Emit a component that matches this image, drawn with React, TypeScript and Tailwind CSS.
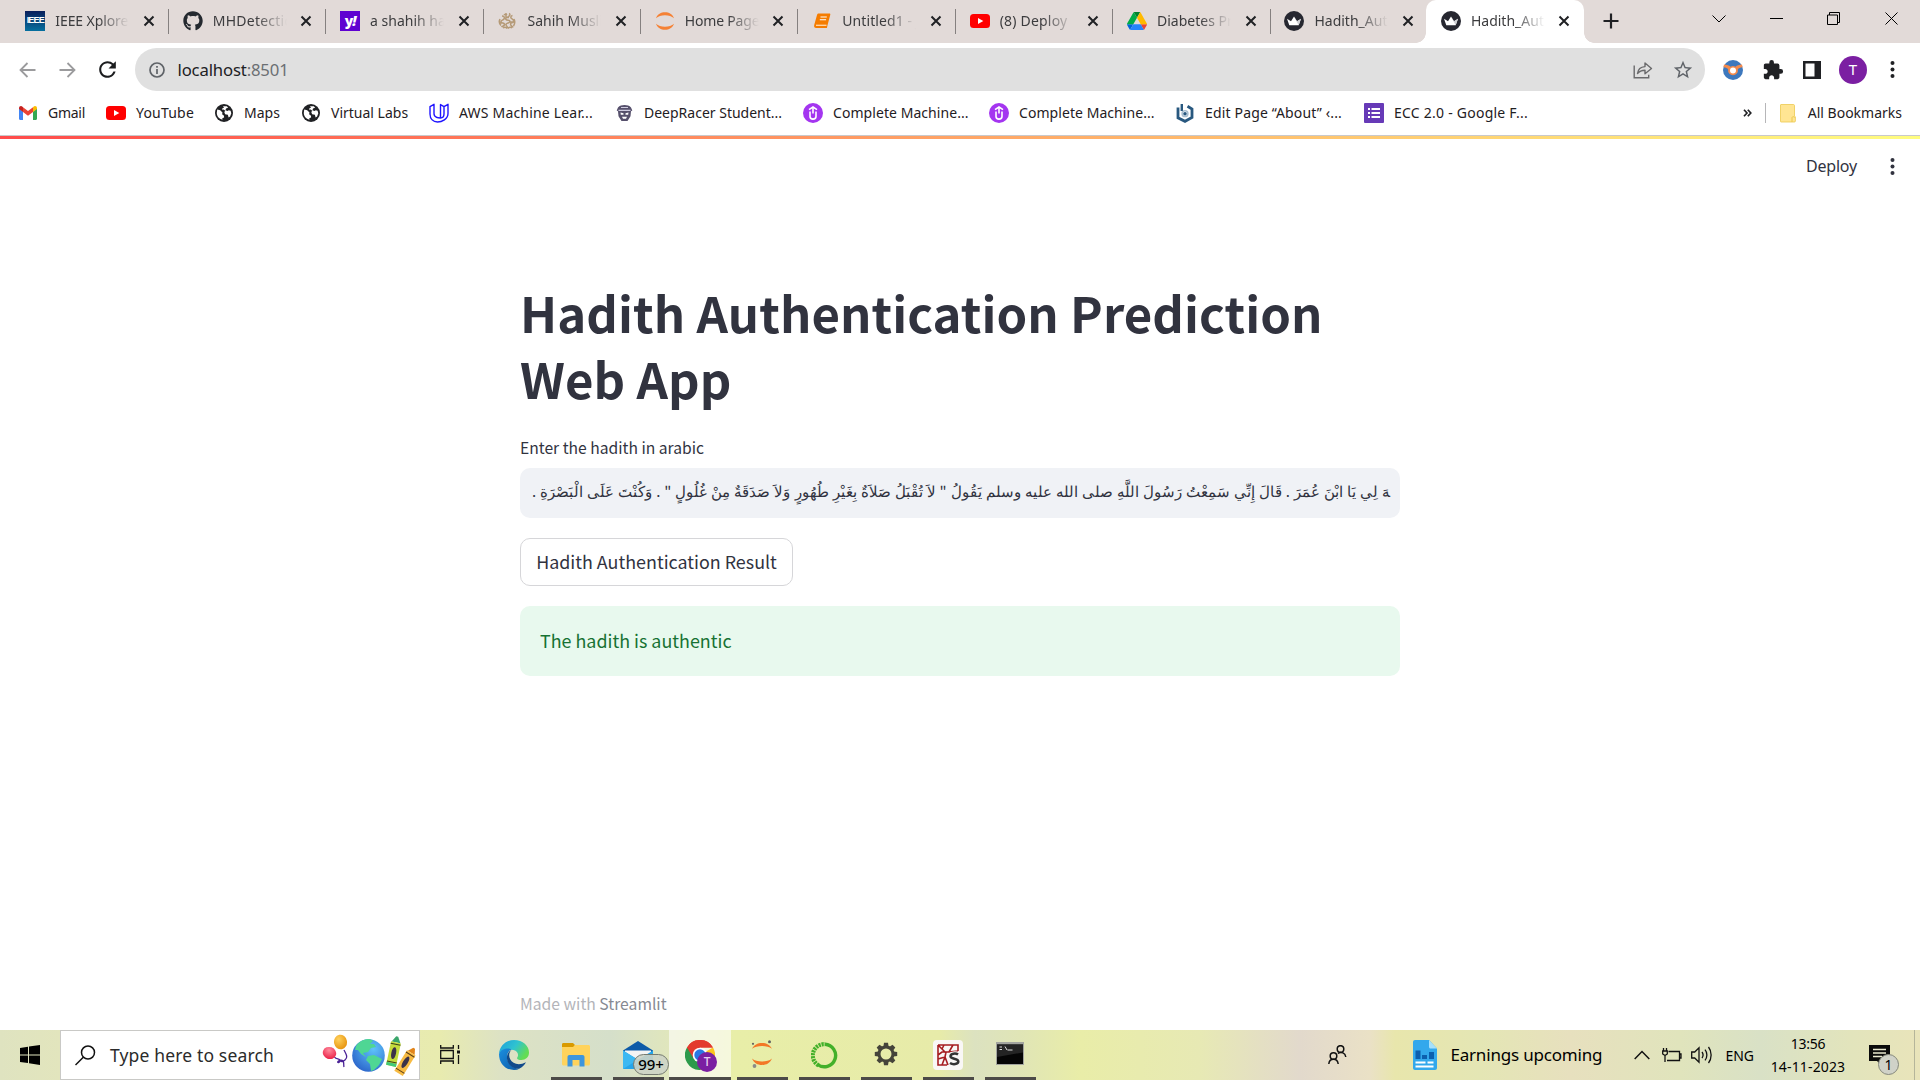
import React from "react";
import { FaGithub } from "react-icons/fa";
import { MdExtension, MdStarBorder, MdRefresh } from "react-icons/md";

const HADITH =
  "\u200Dهَ لِي يَا ابْنَ عُمَرَ . قَالَ إِنِّي سَمِعْتُ رَسُولَ اللَّهِ صلى الله عليه وسلم يَقُولُ \" لاَ تُقْبَلُ صَلاَةٌ بِغَيْرِ طُهُورٍ وَلاَ صَدَقَةٌ مِنْ غُلُولٍ \" . وَكُنْتَ عَلَى الْبَصْرَةِ .";

/* ---------- favicons ---------- */

const IeeeIcon = () => (
  <div className="flex h-5 w-5 items-center justify-center overflow-hidden bg-linear-to-b from-[#0a1f5c] to-[#06709f]">
    <span className="font-['Liberation_Sans',sans-serif] text-[9px] font-bold tracking-[-0.8px] text-white">IEEE</span>
  </div>
);

const YahooIcon = () => (
  <div className="flex h-5 w-5 items-center justify-center bg-[#5f01d1]">
    <span className="font-['Open_Sans',sans-serif] text-[14px] leading-none font-extrabold tracking-[-1px] text-white">
      y<i>!</i>
    </span>
  </div>
);

const SunnahIcon = () => (
  <svg width="20" height="20" viewBox="0 0 20 20" fill="none" stroke="#b59a77" strokeWidth="1.500">
    <path d="M9 2v5M12 2.500c2 1 0 3-1 3.500s-3 1-2 2.500 4 0 4 2-4 1-4 3 2 2 2 4M5 5c2 0 3 1.500 2 3S3.500 9 4 11s3 0 3.500 2-2 2-3 3M15.500 4.500c-2 .5-2 2-1 3s2.500 1 2 3-3 .5-3 2.500 2 2 2.500 3.500M3 8c-1 2-.5 5 1 6.500M17 8c1 2 .8 5-.5 7M7 4c1-1 2-1 3 0M6 17c1.500-1 3-1 4 .5M11 17.500c1-1.500 3-1.500 4-.5M2.500 12h4M13 11h4.500M9 6.500h3" />
  </svg>
);

const JupyterIcon = () => (
  <svg width="20" height="20" viewBox="0 0 20 20" fill="#f58134">
    <path d="M1 7.3C2.500 3.200 6 1.300 10 1.300s7.500 1.900 9 6C16.800 5.300 13.700 4.300 10 4.300s-6.800 1-9 3z" />
    <path d="M1 12.700c1.500 4.100 5 6 9 6s7.500-1.900 9-6c-2.200 2-5.300 3-9 3s-6.800-1-9-3z" />
  </svg>
);

const NotebookIcon = () => (
  <svg width="18" height="18" viewBox="0 0 18 18">
    <path d="M5.500 1.500h10.800c.8 0 1.200.5 1 1.200l-2.800 10.600-.6 2.700H3.200c-1.600 0-2.500-1.300-2-3L4 3c.2-.9.700-1.500 1.500-1.500z" fill="#f57c00" />
    <path d="M7.500 5h6.300M6.800 7.800h6.300" stroke="#fff" strokeWidth="1.100" />
    <path d="M3 13.300h10.500" stroke="#ffd9ad" strokeWidth="1.300" />
  </svg>
);

const YouTubeIcon = () => (
  <svg width="20" height="20" viewBox="0 0 20 20">
    <rect y="3" width="20" height="14" rx="3.500" fill="#f00" />
    <path d="M8 7l5.300 3L8 13z" fill="#fff" />
  </svg>
);

const DriveIcon = () => (
  <svg width="20" height="18" viewBox="0 0 87.3 78">
    <path d="m6.600 66.850 3.850 6.650c.8 1.400 1.950 2.500 3.300 3.300l13.750-23.800h-27.500c0 1.550.4 3.100 1.200 4.500z" fill="#0066da" />
    <path d="m43.650 25-13.750-23.800c-1.350.8-2.500 1.900-3.300 3.300l-25.400 44a9.060 9.060 0 0 0 -1.200 4.500h27.500z" fill="#00ac47" />
    <path d="m73.550 76.800c1.350-.8 2.500-1.900 3.300-3.300l1.600-2.750 7.650-13.250c.8-1.400 1.200-2.950 1.200-4.500h-27.502l5.852 11.500z" fill="#ea4335" />
    <path d="m43.650 25 13.750-23.800c-1.350-.8-2.900-1.200-4.500-1.200h-18.500c-1.600 0-3.150.45-4.500 1.200z" fill="#00832d" />
    <path d="m59.800 53h-32.300l-13.750 23.800c1.350.8 2.900 1.200 4.500 1.200h50.800c1.600 0 3.150-.45 4.500-1.200z" fill="#2684fc" />
    <path d="m73.400 26.500-12.700-22c-.8-1.400-1.950-2.500-3.300-3.300l-13.750 23.800 16.150 28h27.450c0-1.550-.4-3.100-1.200-4.500z" fill="#ffba00" />
  </svg>
);

const CrownIcon = () => (
  <svg width="20" height="20" viewBox="0 0 20 20">
    <circle cx="10" cy="10" r="10" fill="#262730" />
    <path d="M3 7.800l4 2.400L10 5.500l3 4.700 4-2.400-2.300 6.400H5.300z" fill="#fff" />
    <path d="M10 5.500l3 4.700 4-2.400-2.300 6.400z" fill="#cfd0d4" />
  </svg>
);

const GmailIcon = () => (
  <svg width="18" height="14" viewBox="0 0 18 14">
    <path d="M0 2.500V12.800c0 .7.500 1.200 1.200 1.200H4V5.500z" fill="#4285f4" />
    <path d="M14 5.500V14h2.800c.7 0 1.200-.5 1.200-1.200V2.500z" fill="#34a853" />
    <path d="M4 1.200l5 3.800 5-3.800v4.800L9 9.800 4 6z" fill="#ea4335" />
    <path d="M0 2.200C0 .3 2-.6 3.500.7L4 1.200V6L0 3z" fill="#c5221f" />
    <path d="M18 2.200c0-1.900-2-2.800-3.500-1.500l-.5.500V6l4-3z" fill="#fbbc04" />
  </svg>
);

const GlobeIcon = () => (
  <svg width="18" height="18" viewBox="0 0 18 18">
    <circle cx="9" cy="9" r="9" fill="#202124" />
    <path d="M2.200 5.500l3 .8 2.300 2.200-.4 1.800 1.900 1.500.1 1.700-1.800.7.200 1.500C4 15 1.700 12 1.800 8.800z" fill="#fff" />
    <path d="M8 2.200h3.800l1.300 1.500-2.100.8-.5 1.700 2 .7 1.300-.7 1.800.6.7 2.500-1.200 3.300-1.500 1-.7-2.800-2.800-.5-.8-2.200 1-1.300-1.700-1.300-1.500.3.300-1.500 1.600-.5z" fill="#fff" />
  </svg>
);

const UdacityIcon = () => (
  <svg width="20" height="20" viewBox="0 0 20 20" fill="none" stroke="#2015ff" strokeWidth="1.400" strokeLinejoin="round">
    <path d="M5 1.300L1 3.600V11c0 5 3.200 8 7.500 8S19 16 19 10.500V1.300l-4 2.300v7.200c0 2.800-1.500 4.200-3.500 4.200S5 14.500 5 10.500z" />
    <path d="M15 3.600l-3.500-2V15" />
  </svg>
);

const RacerIcon = () => (
  <svg width="17" height="18" viewBox="0 0 17 18">
    <path d="M2 3.500C5 .3 12 .3 15 3.500l1.300 3-1.300.7-.5 5-3 4.800H5.500l-3-4.800-.5-5-1.300-.7z" fill="#56506c" />
    <path d="M2.500 6.300h12M5 3.500h7" stroke="#cfcce0" strokeWidth="1.200" />
    <path d="M4.500 8.500l3 .7v1.500H4.800zM12.500 8.500l-3 .7v1.500h2.700zM6 12.800h5l-1 2H7z" fill="#fff" />
  </svg>
);

const UdemyCircleIcon = () => (
  <svg width="20" height="20" viewBox="0 0 20 20">
    <circle cx="10" cy="10" r="10" fill="#a435f0" />
    <path d="M6 6.700L10 4l4 2.700" fill="none" stroke="#fff" strokeWidth="1.600" />
    <path d="M7 8.500v5c0 1.700 1.100 2.600 3 2.600s3-.9 3-2.600v-5M10 5v5.500" fill="none" stroke="#fff" strokeWidth="1.600" />
  </svg>
);

const HexIcon = () => (
  <svg width="18" height="20" viewBox="0 0 18 20" fill="none" stroke="#28587f" strokeWidth="2.800">
    <path d="M2 4.500v10.300L9 18.300l7-3.800V6L11.500 3.300" />
    <path d="M5.800 1v7" strokeWidth="2.400" />
    <circle cx="9" cy="10.700" r="2.900" strokeWidth="1.500" stroke="#a9bfd0" />
    <circle cx="9" cy="10.700" r="1.800" fill="#28587f" stroke="none" />
  </svg>
);

const FormsIcon = () => (
  <svg width="20" height="20" viewBox="0 0 20 20">
    <rect width="20" height="20" rx="1" fill="#673ab7" />
    <path d="M4 6h2M4 10h2M4 14h2M7.500 6H16M7.500 10H16M7.500 14H16" stroke="#fff" strokeWidth="2" />
  </svg>
);

const FolderIcon = () => (
  <svg width="16" height="19" viewBox="0 0 16 19">
    <path d="M1 .5h12.500c.5 0 1 .5 1 1v10.500l.9 1v4c0 .6-.4 1-1 1H1c-.3 0-.5-.2-.5-.5V1C.5.700.7.500 1 .5z" fill="#ffe593" stroke="#ecc94f" strokeWidth=".8" />
    <path d="M12 18v-4.500c0-1 2.500-1 2.500 0" fill="none" stroke="#ecc94f" />
  </svg>
);

/* ---------- browser chrome ---------- */

const TABS = [
  { icon: <IeeeIcon />, title: "IEEE Xplore", track: "tracking-[-0.1px]" },
  { icon: <FaGithub size={20} color="#24292f" />, title: "MHDetectio", track: "tracking-[0.25px]" },
  { icon: <YahooIcon />, title: "a shahih had", track: "tracking-normal" },
  { icon: <SunnahIcon />, title: "Sahih Musli", track: "tracking-normal" },
  { icon: <JupyterIcon />, title: "Home Page", track: "tracking-[-0.2px]" },
  { icon: <NotebookIcon />, title: "Untitled1 - J", track: "tracking-[0.1px]" },
  { icon: <YouTubeIcon />, title: "(8) Deploy", track: "tracking-[0.2px]" },
  { icon: <DriveIcon />, title: "Diabetes Pre", track: "tracking-normal" },
  { icon: <CrownIcon />, title: "Hadith_Auth", track: "tracking-normal" },
];

const Cross = () => (
  <svg width="12" height="12" viewBox="0 0 12 12" stroke="#202124" strokeWidth="2">
    <path d="M1.500 1.500l9 9M10.500 1.500l-9 9" />
  </svg>
);

function TabBody({ icon, title, track }: { icon: React.ReactNode; title: string; track: string }) {
  return (
    <>
      <span className="flex w-5 shrink-0 justify-center">{icon}</span>
      <span
        className={`ml-[10px] w-[74px] shrink-0 overflow-hidden text-[14px] leading-5 whitespace-nowrap text-[#3c3c3e] mask-[linear-gradient(to_right,black_58%,transparent_100%)] ${track}`}
      >
        {title}
      </span>
      <span className="ml-[13.500px]">
        <Cross />
      </span>
    </>
  );
}

function TabStrip() {
  return (
    <div className="flex h-[43px] bg-[#e2dad8] pl-[11px]">
      {TABS.map((t, i) => (
        <div key={i} className="relative flex h-[42px] w-[157.400px] shrink-0 items-center pl-[14.300px]">
          <TabBody {...t} />
          {i < 8 && <span className="absolute top-[9px] -right-[0.500px] h-[25px] w-px bg-[#85807f]" />}
        </div>
      ))}
      <div className="relative -ml-[1.600px] flex h-[43px] w-[158px] shrink-0 items-center rounded-t-[10px] bg-white pl-[15px] pb-px">
        <span className="absolute bottom-0 -left-[10px] h-[10px] w-[10px] bg-[radial-gradient(circle_at_0_0,#e2dad8_9.500px,white_10px)]" />
        <span className="absolute -right-[10px] bottom-0 h-[10px] w-[10px] bg-[radial-gradient(circle_at_100%_0,#e2dad8_9.500px,white_10px)]" />
        <TabBody icon={<CrownIcon />} title="Hadith_Auth" track="tracking-normal" />
      </div>
      <div className="ml-[19px] flex h-[42px] items-center">
        <svg width="16" height="16" viewBox="0 0 16 16" stroke="#202124" strokeWidth="2.200">
          <path d="M8 .5v15M.5 8h15" />
        </svg>
      </div>
      <div className="ml-auto flex h-[37px] items-center pr-[22px] text-black">
        <svg width="14" height="8" viewBox="0 0 14 8" fill="none" stroke="currentColor">
          <path d="M.5.500L7 7l6.500-6.500" />
        </svg>
        <svg className="ml-[44px]" width="13" height="13" viewBox="0 0 13 13" stroke="currentColor">
          <path d="M0 6.500h13" />
        </svg>
        <svg className="ml-[44px]" width="13" height="13" viewBox="0 0 13 13" fill="none" stroke="currentColor">
          <path d="M.5 3h10v9.500H.5zM2.500 3V.5h10v10h-2" />
        </svg>
        <svg className="ml-[45px]" width="13" height="13" viewBox="0 0 13 13" stroke="currentColor">
          <path d="M.5.500l12 12M12.500.500l-12 12" />
        </svg>
      </div>
    </div>
  );
}

const Dots = ({ color = "#202124" }: { color?: string }) => (
  <svg width="5" height="17" viewBox="0 0 5 17" fill={color}>
    <circle cx="2.500" cy="2.100" r="2" />
    <circle cx="2.500" cy="8.500" r="2" />
    <circle cx="2.500" cy="14.900" r="2" />
  </svg>
);

function Toolbar() {
  return (
    <div className="flex h-[53px] items-center">
      <svg className="ml-[19px]" width="17" height="16" viewBox="0 0 17 16" fill="none" stroke="#9b9b9d" strokeWidth="1.800">
        <path d="M16.500 8H1.500M8.500 1L1.500 8l7 7" />
      </svg>
      <svg className="ml-[23px]" width="17" height="16" viewBox="0 0 17 16" fill="none" stroke="#9b9b9d" strokeWidth="1.800">
        <path d="M.5 8h15M8.500 1l7 7-7 7" />
      </svg>
      <MdRefresh className="ml-[19px]" size={25} color="#1c1d1f" />
      <div className="ml-[15px] flex h-[43px] w-[1570px] items-center rounded-full bg-[#e0e0e0] pl-[14px]">
        <svg width="16" height="16" viewBox="0 0 16 16" fill="none" stroke="#5f6368" strokeWidth="1.700">
          <circle cx="8" cy="8" r="7" />
          <path d="M8 7v5M8 4v1.800" />
        </svg>
        <span className="ml-[12.500px] text-[16.700px] tracking-[-0.150px] text-[#202124]">
          localhost<span className="text-[#6b6f73]">:8501</span>
        </span>
        <svg className="ml-auto" width="20" height="18" viewBox="0 0 20 18" fill="none" stroke="#6a6a6c" strokeWidth="1.400">
          <path d="M1.200 4.500v12.300h14.500v-3" />
          <path d="M4.500 12.500c.5-4.200 3-6.600 7.500-6.900V2l6.500 5.500-6.500 5.200V9.200c-3.500 0-5.500.8-7.500 3.300z" strokeLinejoin="round" />
        </svg>
        <MdStarBorder className="mr-[11px] ml-[19px]" size={22} color="#5f6368" />
      </div>
      <svg className="ml-[18px]" width="20" height="20" viewBox="0 0 20 20">
        <circle cx="10" cy="10" r="10" fill="#3d78bd" />
        <path d="M1 4.500c3 0 5 1 6.500 2.200a5 5 0 0 1 5 0C14 5.500 16 4.500 19 4.500l.6 2.700c-2.600.3-4 .8-4.800 2.200a4.900 4.900 0 1 1-9.600 0C4.400 8 3 7.500.4 7.200z" fill="#f58a4b" />
        <circle cx="10" cy="10.500" r="3" fill="#fff" />
      </svg>
      <MdExtension className="ml-[19px]" size={22} color="#202124" />
      <svg className="ml-[19px]" width="18" height="18" viewBox="0 0 18 18">
        <path d="M0 0h18v18H0z" fill="#202124" />
        <path d="M2.500 2.500h9v13h-9z" fill="#fff" />
      </svg>
      <div className="ml-[18px] flex h-7 w-7 items-center justify-center rounded-full bg-[#7b1fa2] text-[15px] text-white">T</div>
      <span className="ml-[23px]">
        <Dots />
      </span>
    </div>
  );
}

const BOOKMARKS = [
  { icon: <GmailIcon />, label: "Gmail", box: "w-[88px]", track: "tracking-[-0.270px]" },
  { icon: <YouTubeIcon />, label: "YouTube", box: "w-[108px]", track: "tracking-[0.200px]" },
  { icon: <GlobeIcon />, label: "Maps", box: "w-[87px]", track: "tracking-normal" },
  { icon: <GlobeIcon />, label: "Virtual Labs", box: "w-[128px]", track: "tracking-normal" },
  { icon: <UdacityIcon />, label: "AWS Machine Lear...", box: "w-[185px]", track: "tracking-[0.190px]" },
  { icon: <RacerIcon />, label: "DeepRacer Student...", box: "w-[189px]", track: "tracking-normal" },
  { icon: <UdemyCircleIcon />, label: "Complete Machine...", box: "w-[186px]", track: "tracking-[0.060px]" },
  { icon: <UdemyCircleIcon />, label: "Complete Machine...", box: "w-[186px]", track: "tracking-[0.060px]" },
  { icon: <HexIcon />, label: "Edit Page “About” ‹...", box: "w-[189px]", track: "tracking-[0.160px]" },
  { icon: <FormsIcon />, label: "ECC 2.0 - Google F...", box: "w-[200px]", track: "tracking-[0.240px]" },
];

function BookmarkBar() {
  return (
    <div className="flex h-[40px] items-start border-b border-[#c9c9cb] pt-[7px] pl-[18px] text-[14px] leading-5 text-[#1f2023]">
      {BOOKMARKS.map((b, i) => (
        <div key={i} className={`flex h-5 shrink-0 items-center ${b.box}`}>
          <span className="flex w-5 shrink-0 justify-center">{b.icon}</span>
          <span className={`ml-[10px] whitespace-nowrap ${b.track}`}>{b.label}</span>
        </div>
      ))}
      <div className="ml-auto flex h-5 items-center pr-[18px]">
        <svg width="9" height="8" viewBox="0 0 9 8" fill="none" stroke="#202124" strokeWidth="1.700">
          <path d="M1 .7L4 4 1 7.300M4.800.7l3 3.300-3 3.300" />
        </svg>
        <span className="ml-[13px] h-5 w-px bg-[#b6b6b8]" />
        <span className="ml-[14px]">
          <FolderIcon />
        </span>
        <span className="ml-[12px] whitespace-nowrap">All Bookmarks</span>
      </div>
    </div>
  );
}

/* ---------- page ---------- */

function Page() {
  return (
    <div className="flex h-[894px] flex-col bg-white font-['Noto_Sans_CJK_JP',serif] text-[#31333f]">
      <div className="h-[3px] shrink-0 bg-[linear-gradient(90deg,#ff4b4b,#fffd80)]" />
      <div className="flex h-[54px] shrink-0 items-center justify-end pr-[25px]">
        <span className="font-['Noto_Sans',sans-serif] text-[16px] tracking-[-0.200px]">Deploy</span>
        <span className="ml-[33px]">
          <Dots color="#31333f" />
        </span>
      </div>
      <main className="mx-auto flex w-[880px] grow flex-col items-start">
        <h1 className="mt-[86px] text-[49.100px] leading-[66px] font-bold tracking-[0.070px] whitespace-nowrap">
          Hadith Authentication Prediction
          <br />
          Web App
        </h1>
        <label className="mt-[24px] text-[15.650px] leading-[26px] whitespace-nowrap">Enter the hadith in arabic</label>
        <div dir="rtl" className="mt-[7px] flex h-[50px] w-full items-center rounded-[10px] bg-[#f0f2f6] px-[10px]">
          <div className="w-full pb-[5px] text-[15px] leading-[40px] [word-spacing:0.650px] whitespace-nowrap">{HADITH}</div>
        </div>
        <button className="mt-[20px] flex h-[48px] w-[273px] items-center justify-center rounded-[10px] border border-[#d6d6d9] bg-white pb-[2px] text-[17.900px] whitespace-nowrap">
          Hadith Authentication Result
        </button>
        <div className="mt-[20px] flex h-[70px] w-full items-center rounded-[10px] bg-[#e8f9ee] px-5 pb-[2px] text-[17.900px] text-[#177233]">
          The hadith is authentic
        </div>
        <footer className="mt-auto mb-[13px] text-[15.700px] leading-[26px] text-[#b3b4b9]">
          Made with <span className="text-[#868992]">Streamlit</span>
        </footer>
      </main>
    </div>
  );
}

/* ---------- taskbar ---------- */

const EdgeIcon = () => (
  <svg width="30" height="30" viewBox="0 0 30 30">
    <defs>
      <linearGradient id="edgeTop" x1="0" y1="0" x2="1" y2=".5">
        <stop offset="0" stopColor="#1d9fdc" />
        <stop offset=".55" stopColor="#2fc3d0" />
        <stop offset="1" stopColor="#63dd52" />
      </linearGradient>
      <linearGradient id="edgeLow" x1="0" y1="0" x2="1" y2="1">
        <stop offset="0" stopColor="#1b8fe0" />
        <stop offset="1" stopColor="#0c59a4" />
      </linearGradient>
    </defs>
    <path d="M0 14C.5 6 7 0 15 0c9 0 15 6 15 12.500 0 4.700-3.500 7.500-7.500 7.500-3.500 0-5-1.200-4.200-2.400 1.800-2.800.5-6.600-3.800-7.600C8 8.500 2 10 0 14z" fill="url(#edgeTop)" />
    <path d="M0 14C2 9 8 7.500 12.500 9.200 7 12 7 19 10 23c3 4.500 8 6 11 5.500-2 1-4 1.500-6 1.500C6 30 0 23 0 14z" fill="url(#edgeLow)" />
    <path d="M12.500 9.800c-2.500 2.700-3 6.200-1.300 9.500C13.500 24 20 26 27 22.300c-1.500 3-4 5.200-6.500 6.300-5.500.6-11.500-3.100-12.500-9.600-.5-4 1.500-7.500 4.500-9.200z" fill="#114a8b" />
  </svg>
);

const ExplorerIcon = () => (
  <svg width="28" height="24" viewBox="0 0 28 24">
    <path d="M0 1.500C0 .5.500 0 1.500 0h9.500l2 2-1.500 3H0z" fill="#d99a00" />
    <path d="M0 4h11l2-2h13.500c.8 0 1.500.7 1.500 1.500V21c0 .8-.7 1.500-1.500 1.500h-25C.7 22.500 0 21.800 0 21z" fill="#ffd35c" />
    <path d="M5.500 23.500V14c0-1.200.8-2 2-2h13c1.200 0 2 .8 2 2v9.500h-5V17h-7v6.500z" fill="#3e96dd" />
  </svg>
);

const MailIcon = () => (
  <svg width="30" height="28" viewBox="0 0 30 28">
    <path d="M0 9.500L15 0l15 9.500V14H0z" fill="#0d5aa8" />
    <path d="M2 9.500h26V18H2z" fill="#f4f4f4" />
    <path d="M0 9.500l15 9.200 15-9.200V27c0 .6-.4 1-1 1H1c-.6 0-1-.4-1-1z" fill="#26a5ea" />
    <path d="M0 9.500V28l15-9.300z" fill="#3cb8f2" />
  </svg>
);

const ChromeIcon = () => (
  <svg width="30" height="30" viewBox="0 0 30 30">
    <path d="M15 15L2 7.500A15 15 0 0 1 28 7.500H15z" fill="#e33b2e" />
    <path d="M15 15l13-7.500A15 15 0 0 1 15 30z" fill="#fcc31e" />
    <path d="M15 15l.5 15A15 15 0 0 1 2 7.500z" fill="#2c9a4b" />
    <path d="M15 7.500h13A15 15 0 0 0 2 7.500l6.500 11z" fill="#e33b2e" />
    <circle cx="15" cy="15" r="7.300" fill="#fff" />
    <circle cx="15" cy="15" r="5.700" fill="#2a78e4" />
  </svg>
);

const JupyterAppIcon = () => (
  <svg width="22" height="28" viewBox="0 0 22 28">
    <path d="M1 8.800C3 4.800 6.500 3 11 3s8 1.800 10 5.800C18.500 6.800 15 6 11 6S3.500 6.800 1 8.800z" fill="#f37726" />
    <path d="M1 18.500c2 4.500 5.500 6.500 10 6.500s8-2 10-6.500c-2.500 2.300-6 3-10 3s-7.500-.7-10-3z" fill="#f37726" />
    <circle cx="18.500" cy="1.800" r="1.500" fill="#616262" />
    <circle cx="2" cy="3.800" r="1.100" fill="#616262" />
    <circle cx="3.500" cy="26" r="1.900" fill="#8a8b88" />
  </svg>
);

const AnacondaIcon = () => (
  <svg width="27" height="27" viewBox="0 0 27 27" fill="none" stroke="#43b02a">
    <path d="M14 2.200A11.300 11.300 0 1 1 6.500 22.500" strokeWidth="3.400" />
    <path d="M7.500 23.300A11.300 11.300 0 0 1 14 2.200" strokeWidth="4.200" strokeDasharray="2.200 .8" />
  </svg>
);

const GEAR_TEETH = [0, 45, 90, 135, 180, 225, 270, 315];
const GearIcon = () => (
  <svg width="24" height="24" viewBox="0 0 24 24">
    <circle cx="12" cy="12" r="7" fill="none" stroke="#45443a" strokeWidth="3" />
    {GEAR_TEETH.map((a) => (
      <path key={a} d="M10 .8h4l.6 3.700H9.400z" fill="#45443a" transform={`rotate(${a} 12 12)`} />
    ))}
  </svg>
);

const SpyderIcon = () => (
  <svg width="30" height="30" viewBox="0 0 30 30">
    <rect width="30" height="30" rx="4" fill="#f9f7f6" />
    <path d="M5 5h20v6M5 5v20h9M5 5l8 8M11 5l-2 4M20 5l-4 7h-7L5 15M25 11l-9 1M13 12l-1 5-3 8M5 19l7-2 3 8" fill="none" stroke="#a51c20" strokeWidth="1.600" />
    <path d="M25 14.500c-2-1.500-7.500-1.300-7.500 1.800 0 3.200 7.800 1.700 7.800 5.200 0 3-5.500 3.300-8.300 1.500" fill="none" stroke="#f9f7f6" strokeWidth="4.500" />
    <path d="M25 14.500c-2-1.500-7.500-1.300-7.500 1.800 0 3.200 7.800 1.700 7.800 5.200 0 3-5.500 3.300-8.300 1.500" fill="none" stroke="#333" strokeWidth="2.500" />
  </svg>
);

const TerminalIcon = () => (
  <svg width="28" height="23" viewBox="0 0 28 23">
    <path d="M0 0h28v23H0z" fill="#a2a49f" />
    <path d="M1 2.500h26V22H1z" fill="#050505" />
    <path d="M1 2.500h26v8L1 15z" fill="#242424" />
    <path d="M3.500 5h2.500M3.500 7.500h2.500M7.500 5v.1M7.500 7.500v.1M9 4.500l2 3.500M11.500 8h5" stroke="#ddd" />
  </svg>
);

function TaskButton({ children, open, active }: { children?: React.ReactNode; open?: boolean; active?: boolean }) {
  return (
    <div className={`flex h-[50px] w-[62px] shrink-0 flex-col items-center ${active ? "bg-white/60" : ""}`}>
      <div className="flex h-[47px] items-center">{children}</div>
      {open && <span className={`h-[3px] bg-[#4c4a48] ${active ? "w-full" : "w-[51px]"}`} />}
    </div>
  );
}

const SearchArt = () => (
  <svg width="94" height="42" viewBox="0 0 94 42">
    <defs>
      <radialGradient id="ballPink" cx=".4" cy=".3" r=".8">
        <stop offset="0" stopColor="#ff8a9c" />
        <stop offset="1" stopColor="#e8173f" />
      </radialGradient>
      <radialGradient id="ballGold" cx=".4" cy=".3" r=".8">
        <stop offset="0" stopColor="#ffd15c" />
        <stop offset="1" stopColor="#e48d06" />
      </radialGradient>
      <radialGradient id="earth" cx=".65" cy=".3" r=".8">
        <stop offset="0" stopColor="#5ec3fb" />
        <stop offset="1" stopColor="#2a62c9" />
      </radialGradient>
    </defs>
    <path d="M12.500 23c2 3 5 1 5.500 3.500s-3.500 2.500-2 1 5-2 5.500.5 0 3 .5 5M22 16c2 4 4.500 7 1 10s-4 1-5 0" fill="none" stroke="#4a2296" strokeWidth="1.300" />
    <ellipse cx="7.500" cy="19" rx="6.800" ry="6" fill="url(#ballPink)" transform="rotate(20 7.500 19)" />
    <ellipse cx="18.500" cy="8" rx="6.500" ry="7.300" fill="url(#ballGold)" transform="rotate(-10 18.500 8)" />
    <circle cx="46.500" cy="21.500" r="16.300" fill="url(#earth)" />
    <path d="M34 12c4-6 9-7 14-7l3 2-3 3 4 0 2 3-5 1-3 4-5 1 3 4-5-3-3-4-3 0zM46 22l6-1 8 4-3 6-5 5-3 1-1-7-4-4z" fill="#4fd694" />
    <g transform="rotate(12 71 20)">
      <path d="M67 8l3.500-6h2L76 8z" fill="#3aa66b" />
      <path d="M66.500 8h10v24h-10z" fill="#c4dc3c" />
      <path d="M66.500 29h10v3h-10z" fill="#41c878" />
      <path d="M66.500 10h10M66.500 28h10" stroke="#39421b" />
      <ellipse cx="71.500" cy="19" rx="2.400" ry="6" fill="#3c3349" />
    </g>
    <g transform="rotate(32 83 28)">
      <path d="M79.500 17l3-5.500h2l3 5.500z" fill="#e2851b" />
      <path d="M78.500 17h10v24h-10z" fill="#f7bb43" />
      <path d="M78.500 19h10M78.500 38h10" stroke="#5b3c14" />
      <ellipse cx="83.500" cy="28" rx="2.400" ry="6.500" fill="#3c3349" />
    </g>
  </svg>
);

function Taskbar() {
  return (
    <div className="flex h-[50px] items-start overflow-hidden bg-[linear-gradient(90deg,#dfe3c0_0px,#e2e5bd_60px,#e8ebaf_440px,#dde2c4_500px,#d5dfca_610px,#e0e6bd_668px,#e8eea8_735px,#e7eba9_940px,#dce2c0_975px,#e0e5b6_1020px,#e9eda8_1080px,#e7e9b4_1200px,#e2d9cc_1300px,#eae1c6_1370px,#e8e6ac_1395px,#e4e6b4_1480px,#e7e0be_1570px,#e0e4bc_1680px,#d9e1c6_1760px,#e2e4bc_1850px,#e9e4ba_1920px)] text-black">
      <div className="flex h-[50px] w-[60px] shrink-0 items-center justify-center">
        <svg width="20" height="20" viewBox="0 0 20 20">
          <path d="M0 2.900L8 1.800v7.600H0zM9 1.600L20 0v9.400H9zM0 10.400h8V18L0 16.900zM9 10.400h11V20L9 18.300z" />
        </svg>
      </div>
      <div className="flex h-[50px] w-[360px] shrink-0 items-center border border-[#c9c9c6] bg-white pr-[3px] pl-[14px]">
        <svg width="21" height="21" viewBox="0 0 21 21" fill="none" stroke="#111" strokeWidth="1.500">
          <circle cx="13" cy="7.500" r="6.500" />
          <path d="M8.300 12.200L.5 20" />
        </svg>
        <span className="ml-[14px] text-[17.500px] tracking-[0.150px] whitespace-nowrap text-[#2b2b2b]">Type here to search</span>
        <span className="ml-auto">
          <SearchArt />
        </span>
      </div>
      <div className="flex h-[48px] w-[63px] shrink-0 items-center justify-center pr-[3px]">
        <svg width="21" height="19" viewBox="0 0 21 19" fill="none" stroke="#111" strokeWidth="1.300">
          <path d="M.7 0v3h12.600V0M.7 19v-3h12.600v3M.7 5.500h12.600v8H.7zM18.500 0v4M18.500 10v9" />
          <path d="M17 5.500h3v3h-3z" fill="#111" stroke="none" />
        </svg>
      </div>
      <TaskButton>
        <span className="pt-[3px]"><EdgeIcon /></span>
      </TaskButton>
      <TaskButton open>
        <span className="pt-[2px]"><ExplorerIcon /></span>
      </TaskButton>
      <TaskButton open>
        <span className="relative pt-[3px]">
          <MailIcon />
          <span className="absolute top-[16px] left-[10px] flex h-[21px] w-[36px] items-center justify-center rounded-full border border-[#757a70] bg-[#cdd3c5]/90 text-[15px] leading-none font-medium">
            99+
          </span>
        </span>
      </TaskButton>
      <TaskButton open active>
        <span className="relative pt-[3px]">
          <ChromeIcon />
          <span className="absolute top-[15px] left-[12px] flex h-5 w-5 items-center justify-center rounded-full bg-[#7b1fa2] text-[12px] leading-none font-medium text-[#e6cfee]">
            T
          </span>
        </span>
      </TaskButton>
      <TaskButton open><JupyterAppIcon /></TaskButton>
      <TaskButton open>
        <span className="pt-[3px]"><AnacondaIcon /></span>
      </TaskButton>
      <TaskButton open><GearIcon /></TaskButton>
      <TaskButton open>
        <span className="pt-[3px]"><SpyderIcon /></span>
      </TaskButton>
      <TaskButton open><TerminalIcon /></TaskButton>
      <div className="ml-auto flex h-[50px] shrink-0 items-center whitespace-nowrap">
        <svg width="19" height="20" viewBox="0 0 19 20" fill="none" stroke="#111" strokeWidth="1.500">
          <circle cx="12.500" cy="4" r="3.300" />
          <circle cx="5.500" cy="11" r="3.300" />
          <path d="M.8 19c.3-3 2-4.700 4.700-4.700s4.300 1.700 4.700 4.700M9.800 8.300c3.800-2 7.400-.3 8 3.700" />
        </svg>
        <svg className="ml-[66px]" width="24" height="30" viewBox="0 0 24 30">
          <path d="M2 0h14l8 8.500V28c0 1.100-.9 2-2 2H2c-1.100 0-2-.9-2-2V2C0 .9.900 0 2 0z" fill="#33a8ec" />
          <path d="M16 0l8 8.500h-6.500c-.8 0-1.500-.7-1.500-1.500z" fill="#a6e0fb" />
          <path d="M2.500 10.500h5V19h-5zM9 15h5v4H9zM16 12h5v7h-5z" fill="#0c5fae" />
          <path d="M2.500 22.500h10M14.500 22.500h6M2.500 26.500h18" stroke="#fff" strokeWidth="1.800" />
        </svg>
        <span className="ml-[13px] w-[154px] text-[17px] tracking-[-0.180px]">Earnings upcoming</span>
        <svg className="ml-[30px]" width="16" height="10" viewBox="0 0 16 10" fill="none" stroke="#111" strokeWidth="1.500">
          <path d="M.7 9L8 1.500 15.300 9" />
        </svg>
        <svg className="ml-[12px]" width="20" height="15" viewBox="0 0 20 15" fill="none" stroke="#111" strokeWidth="1.300">
          <path d="M6.500 3.500h11v9H5M17.500 6H19v4h-1.500M1.500 0v3M4.500 0v3M.7 3h4.600v3L3 7.500.7 6zM3 7.500V14" />
        </svg>
        <svg className="ml-[9px]" width="22" height="18" viewBox="0 0 22 18" fill="none" stroke="#111" strokeWidth="1.300">
          <path d="M.7 6h3L8 1.800v14.400L3.700 12h-3zM11 6c1.300 1.800 1.300 4.200 0 6M14 3.700c2.500 3 2.500 7.600 0 10.600M17.500 1c3.500 4.500 3.500 11.500 0 16" />
        </svg>
        <span className="ml-[12px] text-[14px]">ENG</span>
        <div className="ml-[16px] w-[76px] text-center text-[14px] leading-[23px]">
          <div className="tracking-[-0.300px]">13:56</div>
          <div className="tracking-[0.150px]">14-11-2023</div>
        </div>
        <div className="relative ml-[23px] h-[50px] w-[45px]">
          <svg className="mt-[15px]" width="21" height="20" viewBox="0 0 21 20">
            <path d="M0 0h21v16h-9v4l-4-4H0z" fill="#0a0a0a" />
            <path d="M4 4.500h13M4 8h13M4 11.500h9" stroke="#e9e9d0" strokeWidth="1.400" />
          </svg>
          <span className="absolute top-[24px] left-[9px] flex h-[21px] w-[21px] items-center justify-center rounded-full border border-[#85887c] bg-[#d0d2c8] text-[14px] leading-none">
            1
          </span>
        </div>
        <span className="mr-[5px] h-[50px] w-px bg-[#b5b59a]" />
      </div>
    </div>
  );
}

export default function App() {
  return (
    <div className="flex h-[1080px] w-[1920px] flex-col overflow-hidden bg-white font-['Noto_Sans','Open_Sans',sans-serif]">
      <TabStrip />
      <Toolbar />
      <BookmarkBar />
      <Page />
      <Taskbar />
    </div>
  );
}
